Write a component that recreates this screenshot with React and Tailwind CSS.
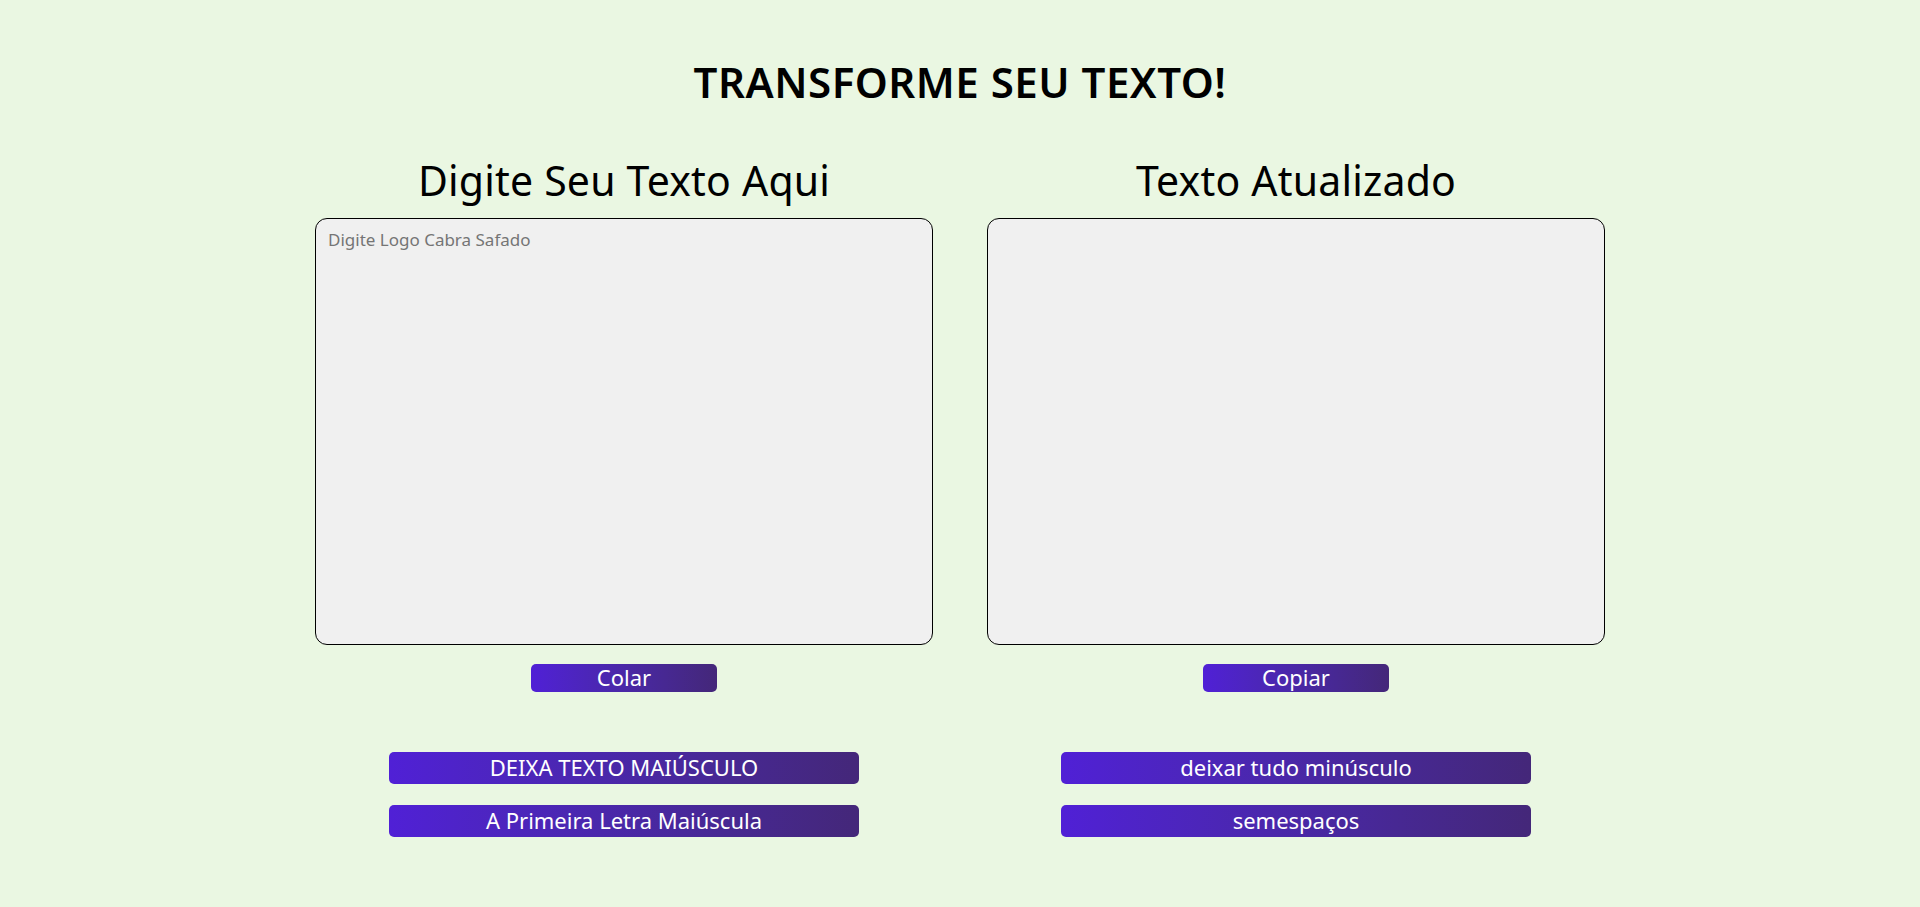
import { useState } from 'react';

const btn =
  'rounded-[5px] bg-linear-to-r from-[#5020d6] to-[#442779] pb-[2px] text-white text-[22px] leading-none cursor-pointer';

const App = () => {
  const [texto, setTexto] = useState('');
  const [saida, setSaida] = useState('');

  const colar = async () => {
    try {
      const t = await navigator.clipboard.readText();
      setTexto(t);
    } catch (e) {
      // sem permissão
    }
  };

  const copiar = () => {
    navigator.clipboard?.writeText(saida).catch(() => {});
  };

  const primeiraMaiuscula = (t) =>
    t
      .toLowerCase()
      .split(' ')
      .map((p) => p.charAt(0).toUpperCase() + p.slice(1))
      .join(' ');

  return (
    <div className="min-h-screen bg-[#eaf7e2] font-['Noto_Sans',sans-serif] text-black">
      <h1 className="pt-[58px] text-center text-[42px] font-semibold leading-[48px] tracking-[0.5px]">
        TRANSFORME SEU TEXTO!
      </h1>

      <div className="mx-auto mt-[50px] grid w-[1290px] grid-cols-2 gap-x-[54px]">
        <div className="flex flex-col items-center">
          <h2 className="text-center text-[41px] leading-[48px] tracking-[0.2px]">Digite Seu Texto Aqui</h2>
          <textarea
            value={texto}
            onChange={(e) => setTexto(e.target.value)}
            placeholder="Digite Logo Cabra Safado"
            className="mt-[14px] h-[427px] w-full resize-none rounded-xl border border-black bg-[#f0f0f0] px-3 py-[8px] text-[17px] outline-none placeholder:text-[#757575]"
          />
          <button onClick={colar} className={`${btn} mt-[19px] h-[28px] w-[186px]`}>
            Colar
          </button>
        </div>
        <div className="flex flex-col items-center">
          <h2 className="text-center text-[41px] leading-[48px] tracking-[0.2px]">Texto Atualizado</h2>
          <textarea
            value={saida}
            readOnly
            className="mt-[14px] h-[427px] w-full resize-none rounded-xl border border-black bg-[#f0f0f0] px-3 py-[8px] text-[17px] outline-none"
          />
          <button onClick={copiar} className={`${btn} mt-[19px] h-[28px] w-[186px]`}>
            Copiar
          </button>
        </div>
      </div>

      <div className="mx-auto mt-[60px] grid w-[1290px] grid-cols-2 gap-x-[54px]">
        <div className="flex flex-col items-center gap-[21px]">
          <button onClick={() => setSaida(texto.toUpperCase())} className={`${btn} h-[32px] w-[470px]`}>
            DEIXA TEXTO MAIÚSCULO
          </button>
          <button onClick={() => setSaida(primeiraMaiuscula(texto))} className={`${btn} h-[32px] w-[470px]`}>
            A Primeira Letra Maiúscula
          </button>
        </div>
        <div className="flex flex-col items-center gap-[21px]">
          <button onClick={() => setSaida(texto.toLowerCase())} className={`${btn} h-[32px] w-[470px]`}>
            deixar tudo minúsculo
          </button>
          <button onClick={() => setSaida(texto.replace(/\s+/g, ''))} className={`${btn} h-[32px] w-[470px]`}>
            semespaços
          </button>
        </div>
      </div>
    </div>
  );
};

export default App;
